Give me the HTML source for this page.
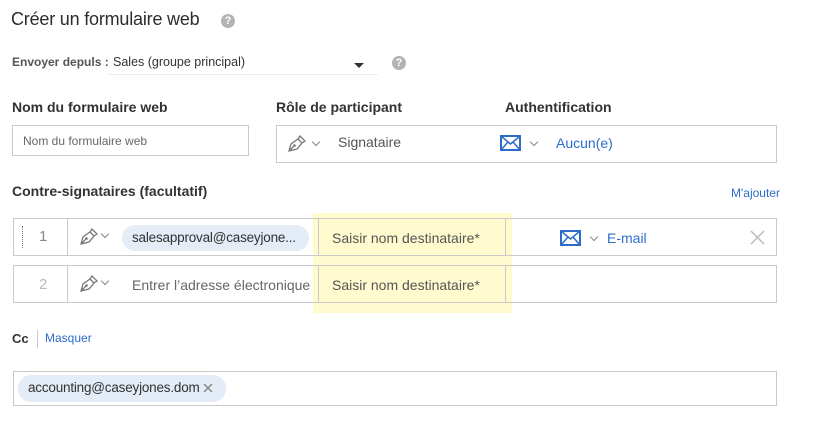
<!DOCTYPE html>
<html><head><meta charset="utf-8"><style>
*{box-sizing:border-box;margin:0;padding:0}
body{width:832px;height:429px;background:#fff;font-family:"Liberation Sans",sans-serif;color:#323232;position:relative;overflow:hidden}
.a{position:absolute;white-space:nowrap}
.b{font-weight:bold}
.box{position:absolute;border:1px solid #cacaca;background:#fff}
.blue{color:#2d6dc9}
.help{position:absolute;width:14px;height:14px;border-radius:50%;background:#b3b3b3;color:#fff;font-size:11px;font-weight:bold;text-align:center;line-height:14px}
.chev{position:absolute;width:6px;height:6px;border-right:1.5px solid #888;border-bottom:1.5px solid #888;transform:rotate(45deg)}
.pill{position:absolute;background:#e4ecf7;border-radius:13px;font-size:13.5px;color:#323232;white-space:nowrap;letter-spacing:-0.2px}
.vl{position:absolute;width:1px;background:#cacaca}
</style></head><body>
<div class="a" style="left:11px;top:9px;font-size:18px;color:#2c2c2c;letter-spacing:-0.2px">Créer un formulaire web</div>
<div class="help" style="left:221px;top:14px">?</div>

<div class="a b" style="left:12px;top:55px;font-size:12px;color:#555">Envoyer depuls :</div>
<div class="a" style="left:113px;top:55px;font-size:12.5px">Sales (groupe principal)</div>
<div style="position:absolute;left:108px;top:74px;width:270px;height:1px;background:#eee"></div>
<div style="position:absolute;left:354px;top:63px;border-left:5px solid transparent;border-right:5px solid transparent;border-top:5px solid #333"></div>
<div class="help" style="left:392px;top:56px">?</div>

<div class="a b" style="left:12px;top:99px;font-size:14px">Nom du formulaire web</div>
<div class="a b" style="left:276px;top:99px;font-size:14px">Rôle de participant</div>
<div class="a b" style="left:505px;top:99px;font-size:14px">Authentification</div>

<div class="box" style="left:12px;top:125px;width:237px;height:31px"></div>
<div class="a" style="left:23px;top:134px;font-size:12px;color:#666">Nom du formulaire web</div>
<div class="box" style="left:276px;top:125px;width:501px;height:38px"></div>
<svg class="a" style="left:286px;top:134px" width="22" height="20" viewBox="0 0 22 20"><path d="M3 17 L5 10 L12 5 L16 9 L11 15 Z M3 17 L8 12 M12 5 L14 2 L19 7 L16 9" fill="none" stroke="#777" stroke-width="1.3"/><circle cx="8.5" cy="11.5" r="1.3" fill="#777"/></svg>
<div class="chev" style="left:313px;top:139px"></div>
<div class="a" style="left:338px;top:134px;font-size:14px;color:#555">Signataire</div>
<svg class="a" style="left:500px;top:135px" width="21" height="16" viewBox="0 0 21 16"><rect x="1" y="1" width="19" height="14" fill="#fff" stroke="#2d6dc9" stroke-width="2"/><path d="M1 1 L10.5 9 L20 1 M1 15 L8 7 M20 15 L13 7" stroke="#2d6dc9" stroke-width="1.5" fill="none"/></svg>
<div class="chev" style="left:531px;top:139px"></div>
<div class="a blue" style="left:556px;top:135px;font-size:14px">Aucun(e)</div>

<div class="a b" style="left:12px;top:183px;font-size:14px">Contre-signataires (facultatif)</div>
<div class="a blue" style="left:731px;top:186px;font-size:12px">M'ajouter</div>

<div style="position:absolute;left:313px;top:213px;width:199px;height:100px;background:#fffbcf"></div>

<div class="box" style="left:13px;top:218px;width:764px;height:38px;background:transparent"></div>
<div style="position:absolute;left:22px;top:226px;height:22px;border-left:1.5px dotted #777"></div>
<div class="a" style="left:39px;top:228px;font-size:15px;color:#888">1</div>
<div class="vl" style="left:67px;top:219px;height:36px"></div>
<svg class="a" style="left:78px;top:227px" width="22" height="20" viewBox="0 0 22 20"><path d="M3 17 L5 10 L12 5 L16 9 L11 15 Z M3 17 L8 12 M12 5 L14 2 L19 7 L16 9" fill="none" stroke="#777" stroke-width="1.3"/><circle cx="8.5" cy="11.5" r="1.3" fill="#777"/></svg>
<div class="chev" style="left:102px;top:231px"></div>
<div class="pill" style="left:122px;top:225px;width:187px;height:26px;padding:5px 10px">salesapproval@caseyjone...</div>
<div class="vl" style="left:318px;top:219px;height:36px"></div>
<div class="vl" style="left:505px;top:219px;height:36px"></div>
<div class="a" style="left:332px;top:230px;font-size:14px;color:#555">Saisir nom destinataire*</div>
<svg class="a" style="left:560px;top:230px" width="21" height="16" viewBox="0 0 21 16"><rect x="1" y="1" width="19" height="14" fill="#fff" stroke="#2d6dc9" stroke-width="2"/><path d="M1 1 L10.5 9 L20 1 M1 15 L8 7 M20 15 L13 7" stroke="#2d6dc9" stroke-width="1.5" fill="none"/></svg>
<div class="chev" style="left:591px;top:234px"></div>
<div class="a blue" style="left:607px;top:230px;font-size:14px">E-mail</div>
<svg class="a" style="left:750px;top:230px" width="15" height="15"><path d="M1 1L14 14M14 1L1 14" stroke="#bbb" stroke-width="1.5"/></svg>

<div class="box" style="left:13px;top:265px;width:764px;height:38px;background:transparent"></div>
<div class="a" style="left:39px;top:276px;font-size:15px;color:#bbb">2</div>
<div class="vl" style="left:67px;top:266px;height:36px"></div>
<svg class="a" style="left:78px;top:274px" width="22" height="20" viewBox="0 0 22 20"><path d="M3 17 L5 10 L12 5 L16 9 L11 15 Z M3 17 L8 12 M12 5 L14 2 L19 7 L16 9" fill="none" stroke="#777" stroke-width="1.3"/><circle cx="8.5" cy="11.5" r="1.3" fill="#777"/></svg>
<div class="chev" style="left:102px;top:278px"></div>
<div class="a" style="left:132px;top:277px;font-size:14px;color:#666;width:178px;overflow:hidden">Entrer l’adresse électronique du</div>
<div class="vl" style="left:318px;top:266px;height:36px"></div>
<div class="vl" style="left:505px;top:266px;height:36px"></div>
<div class="a" style="left:332px;top:277px;font-size:14px;color:#555">Saisir nom destinataire*</div>

<div class="a b" style="left:12px;top:331px;font-size:13px">Cc</div>
<div class="vl" style="left:37px;top:330px;height:18px"></div>
<div class="a blue" style="left:45px;top:331px;font-size:12px">Masquer</div>

<div class="box" style="left:13px;top:371px;width:764px;height:35px"></div>
<div class="pill" style="left:18px;top:375px;width:208px;height:27px;padding:5px 10px">accounting@caseyjones.dom</div>
<svg class="a" style="left:203px;top:383px" width="10" height="10"><path d="M1 1L9 9M9 1L1 9" stroke="#888" stroke-width="1.5"/></svg>
</body></html>
